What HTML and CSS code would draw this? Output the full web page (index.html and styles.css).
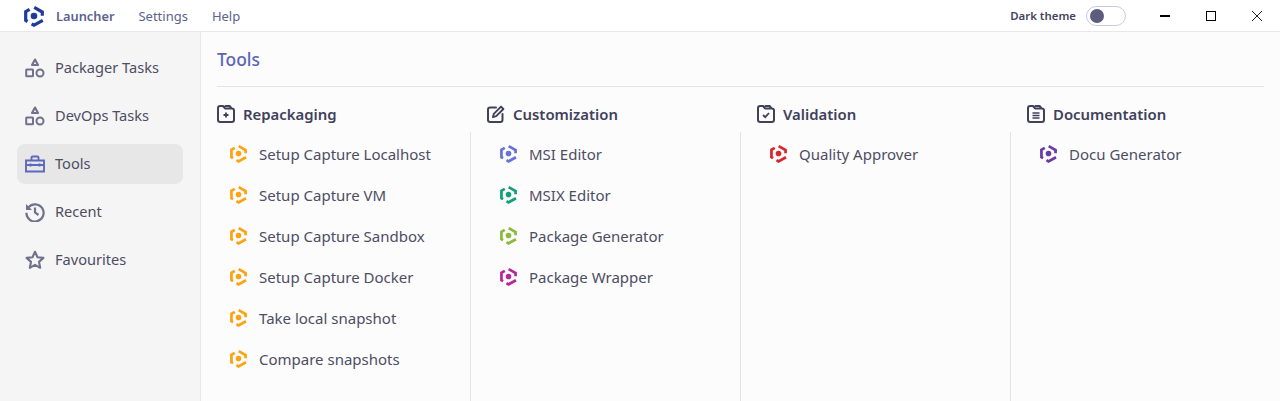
FILE: index.html
```html
<!DOCTYPE html>
<html lang="en">
<head>
<meta charset="utf-8">
<title>Launcher</title>
<link rel="stylesheet" href="styles.css">
</head>
<body>
<svg class="defs" width="0" height="0" aria-hidden="true">
  <symbol id="logo" viewBox="0 0 20 22">
    <path d="M10.2 2.4 18.3 7V10.8" fill="none" stroke="currentColor" stroke-width="3.2"/>
    <path d="M18.8 15.4 10 20.2 7.6 18.8" fill="none" stroke="currentColor" stroke-width="3.2"/>
    <path d="M5.6 4.4 1.7 6.7V15.4L3.6 16.5" fill="none" stroke="currentColor" stroke-width="3.2"/>
    <circle cx="10" cy="11" r="3.3" fill="currentColor"/>
  </symbol>
  <symbol id="shapes" viewBox="0 0 20 20">
    <path d="M10 1.5 13 7H7Z" fill="none" stroke="currentColor" stroke-width="2.1" stroke-linejoin="round"/>
    <rect x="1.2" y="11.5" width="6.8" height="6.8" rx=".6" fill="none" stroke="currentColor" stroke-width="2"/>
    <circle cx="15" cy="15" r="3.5" fill="none" stroke="currentColor" stroke-width="2"/>
  </symbol>
  <symbol id="folder" viewBox="0 0 18 18">
    <path d="M1 3.2C1 2 2 1 3.2 1H6L8 3.4H14.8C16 3.4 17 4.2 17 5.4V14.8C17 16 16 17 14.8 17H3.2C2 17 1 16 1 14.8Z M8.5 1H12.6L14.6 3.4" fill="none" stroke="currentColor" stroke-width="2" stroke-linejoin="round" stroke-linecap="round"/>
  </symbol>
</svg>

<header class="topbar">
  <svg class="app-logo"><use href="#logo"/></svg>
  <span class="app-name">Launcher</span>
  <nav class="menu"><span>Settings</span><span>Help</span></nav>
  <div class="top-right">
    <span class="theme-label">Dark theme</span>
    <span class="toggle"><span class="knob"></span></span>
    <div class="win-controls">
      <span class="win-btn"><svg width="12" height="12" viewBox="0 0 12 12"><path d="M1 6H11" stroke="#000" stroke-width="2"/></svg></span>
      <span class="win-btn"><svg width="12" height="12" viewBox="0 0 12 12"><rect x="1.5" y="1.5" width="9" height="9" fill="none" stroke="#000"/></svg></span>
      <span class="win-btn"><svg width="12" height="12" viewBox="0 0 12 12"><path d="M1 1 11 11M11 1 1 11" stroke="#222" stroke-width="1"/></svg></span>
    </div>
  </div>
</header>

<div class="main">
  <aside class="sidebar">
    <div class="nav-item"><svg class="nav-icon"><use href="#shapes"/></svg>Packager Tasks</div>
    <div class="nav-item"><svg class="nav-icon"><use href="#shapes"/></svg>DevOps Tasks</div>
    <div class="nav-item active">
      <svg class="nav-icon tools" viewBox="0 0 20 20"><path d="M1 6.5H19V17.5H1ZM6.5 6.5V3.5C6.5 2.9 7 2.5 7.5 2.5H12.5C13 2.5 13.5 2.9 13.5 3.5V6.5M1 11H19M5.5 9.5V12.5M14.5 9.5V12.5" fill="none" stroke="currentColor" stroke-width="1.9"/></svg>Tools
    </div>
    <div class="nav-item">
      <svg class="nav-icon" viewBox="0 0 20 20"><path d="M3.4 5.4A8.6 8.6 0 1 1 1.4 10.8" fill="none" stroke="currentColor" stroke-width="2.2"/><path d="M1 2V8H7Z" fill="currentColor"/><path d="M10 5.5V10.5L13.5 13" fill="none" stroke="currentColor" stroke-width="2.2"/></svg>Recent
    </div>
    <div class="nav-item">
      <svg class="nav-icon" viewBox="0 0 20 20"><path d="M10 1.8 12.5 7.2 18.4 7.9 14 11.9 15.2 17.8 10 14.8 4.8 17.8 6 11.9 1.6 7.9 7.5 7.2Z" fill="none" stroke="currentColor" stroke-width="2.1" stroke-linejoin="round"/></svg>Favourites
    </div>
  </aside>

  <main class="content">
    <h1 class="title">Tools</h1>
    <div class="columns">
      <section class="column">
        <h2 class="col-head">
          <svg class="head-icon"><use href="#folder"/><path d="M9 7.5V12.5M6.5 10H11.5" stroke="currentColor" stroke-width="1.8"/></svg>Repackaging
        </h2>
        <ul class="tool-list orange">
          <li><svg class="tool-icon"><use href="#logo"/></svg>Setup Capture Localhost</li>
          <li><svg class="tool-icon"><use href="#logo"/></svg>Setup Capture VM</li>
          <li><svg class="tool-icon"><use href="#logo"/></svg>Setup Capture Sandbox</li>
          <li><svg class="tool-icon"><use href="#logo"/></svg>Setup Capture Docker</li>
          <li><svg class="tool-icon"><use href="#logo"/></svg>Take local snapshot</li>
          <li><svg class="tool-icon"><use href="#logo"/></svg>Compare snapshots</li>
        </ul>
      </section>
      <section class="column">
        <h2 class="col-head">
          <svg class="head-icon" viewBox="0 0 18 18"><path d="M9 2.5H3.2C2 2.5 1 3.5 1 4.7V14.8C1 16 2 17 3.2 17H13.3C14.5 17 15.5 16 15.5 14.8V9" fill="none" stroke="currentColor" stroke-width="2" stroke-linecap="round"/><path d="M6 12.2 6.8 8.8 14 1.6 16.4 4 9.2 11.2Z" fill="none" stroke="currentColor" stroke-width="1.9" stroke-linejoin="round"/></svg>Customization
        </h2>
        <ul class="tool-list">
          <li><svg class="tool-icon periwinkle"><use href="#logo"/></svg>MSI Editor</li>
          <li><svg class="tool-icon green"><use href="#logo"/></svg>MSIX Editor</li>
          <li><svg class="tool-icon lime"><use href="#logo"/></svg>Package Generator</li>
          <li><svg class="tool-icon magenta"><use href="#logo"/></svg>Package Wrapper</li>
        </ul>
      </section>
      <section class="column">
        <h2 class="col-head">
          <svg class="head-icon"><use href="#folder"/><path d="M6 10 8.2 12.2 12 8" fill="none" stroke="currentColor" stroke-width="1.8"/></svg>Validation
        </h2>
        <ul class="tool-list">
          <li><svg class="tool-icon red"><use href="#logo"/></svg>Quality Approver</li>
        </ul>
      </section>
      <section class="column">
        <h2 class="col-head">
          <svg class="head-icon"><use href="#folder"/><path d="M5.5 8H12.5M5.5 10.5H12.5M5.5 13H12.5" stroke="currentColor" stroke-width="1.5"/></svg>Documentation
        </h2>
        <ul class="tool-list">
          <li><svg class="tool-icon purple"><use href="#logo"/></svg>Docu Generator</li>
        </ul>
      </section>
    </div>
  </main>
</div>
</body>
</html>
```
FILE: styles.css
```css
* { box-sizing: border-box; }
html, body { height: 100%; }
body {
  margin: 0;
  height: 401px;
  overflow: hidden;
  display: flex;
  flex-direction: column;
  font-family: "Noto Sans", sans-serif;
  color: #4a4a62;
  background: #fcfcfc;
}
.defs { position: absolute; }
.topbar {
  flex: none;
  height: 32px;
  display: flex;
  align-items: center;
  padding-left: 24px;
  background: #fff;
  border-bottom: 1px solid #e8e8e8;
}
.app-logo { width: 20px; height: 22px; color: #1f3a9e; }
.app-name { margin-left: 12px; font-size: 12.8px; font-weight: 600; color: #5a628f; }
.menu { display: flex; gap: 24px; margin-left: 24px; padding-top: 1px; font-size: 13px; color: #5a6290; }
.top-right { margin-left: auto; display: flex; align-items: center; }
.theme-label { font-size: 11.4px; font-weight: 600; color: #44445e; }
.toggle {
  width: 40px;
  height: 20px;
  margin-left: 10px;
  padding: 2px 3px;
  border: 1px solid #c9c9e4;
  border-radius: 10px;
  background: #fff;
}
.knob { display: block; width: 14px; height: 14px; border-radius: 50%; background: #5c5c7e; }
.win-controls { display: flex; margin-left: 16px; }
.win-btn { width: 46px; height: 31px; display: flex; align-items: center; justify-content: center; }
.main { flex: 1; display: flex; min-height: 0; }
.sidebar {
  flex: none;
  width: 201px;
  padding: 16px 17px 0;
  display: flex;
  flex-direction: column;
  gap: 8px;
  background: #f5f5f5;
  border-right: 1px solid #e8e8e8;
}
.nav-item {
  height: 40px;
  display: flex;
  align-items: center;
  gap: 10px;
  padding-left: 8px;
  padding-bottom: 2px;
  border-radius: 8px;
  font-size: 14.6px;
  color: #4d4d63;
}
.nav-item.active { background: #e7e7e7; }
.nav-icon { width: 20px; height: 20px; margin-top: 2px; color: #71718d; flex: none; }
.nav-icon.tools { color: #5d69bd; }
.content { flex: 1; min-width: 0; display: flex; flex-direction: column; padding-top: 15px; }
.title {
  margin: 0 16px 0 16px;
  height: 40px;
  font-size: 17.4px;
  line-height: 25px;
  font-weight: 500;
  color: #5a66b8;
  border-bottom: 1px solid #e4e4e4;
}
.columns { flex: 1; display: flex; padding-top: 15px; }
.column { width: 270px; flex: none; display: flex; flex-direction: column; }
.col-head {
  margin: 0;
  height: 30px;
  padding-left: 16px;
  display: flex;
  align-items: flex-start;
  gap: 8px;
  font-size: 14.9px;
  line-height: 24px;
  font-weight: 600;
  color: #41415a;
}
.head-icon { width: 18px; height: 18px; margin-top: 3px; color: #41415a; flex: none; }
.tool-list {
  flex: 1;
  margin: 0;
  padding: 1px 0 0 29px;
  list-style: none;
  font-size: 15px;
  color: #4d4d63;
  border-right: 1px solid #e4e4e4;
}
.column:last-child .tool-list { border-right: 0; }
.tool-list li { height: 41px; display: flex; align-items: center; gap: 12px; }
.tool-icon { width: 17px; height: 19px; flex: none; }
.orange { color: #4d4d63; }
.orange .tool-icon { color: #fca311; }
.periwinkle { color: #6672d8; }
.green { color: #12a07a; }
.lime { color: #8cba3c; }
.magenta { color: #b5289a; }
.red { color: #d8252e; }
.purple { color: #6c3aa6; }
```
